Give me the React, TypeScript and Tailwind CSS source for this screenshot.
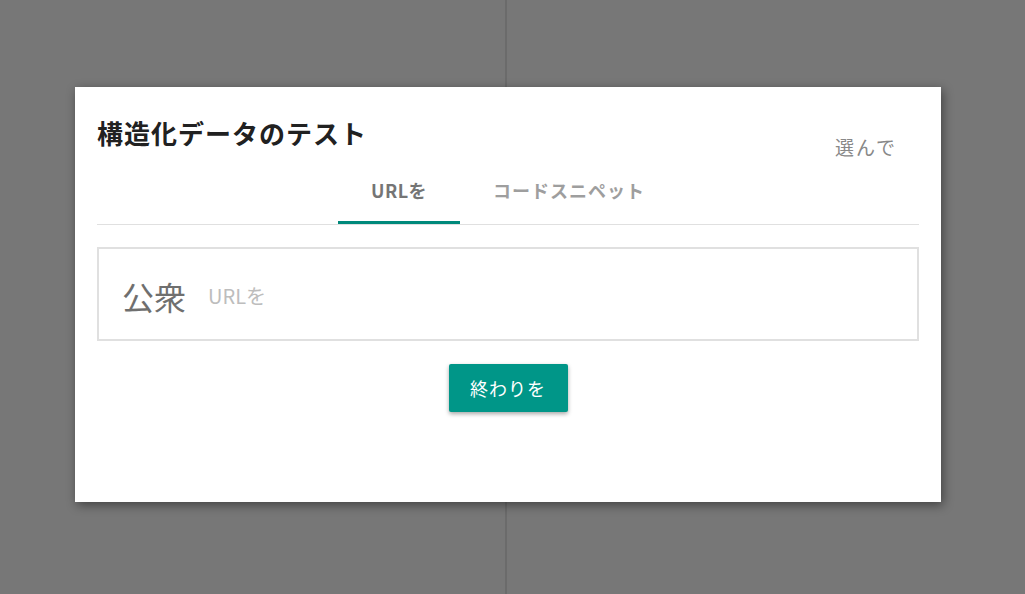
import React from 'react';

const JP = { fontFamily: '"Noto Sans CJK JP", "Noto Sans", Roboto, sans-serif' };

const App: React.FC = () => {
  return (
    <div className="relative h-[594px] w-full overflow-hidden bg-[#777777]" style={JP}>
      {/* background page split */}
      <div className="flex h-full">
        <div className="w-[507px] h-full border-r-2 border-[#6b6b6b]" />
        <div className="flex-1 h-full" />
      </div>

      {/* dialog */}
      <div className="absolute left-[75px] top-[87px] w-[866px] h-[415px] bg-white shadow-[2px_3px_10px_rgba(0,0,0,0.45)] px-[22px] pt-[30px]">
        <div className="flex justify-between h-[32px]">
          <h1 className="text-[26px] leading-[32px] font-bold text-[#212121] tracking-[1px]">構造化データのテスト</h1>
          <span className="mt-[19px] mr-[22px] text-[19px] leading-[22px] text-[#888888] tracking-[2px]">選んで</span>
        </div>

        <div className="flex justify-center border-b border-[#e0e0e0]">
          <div className="px-[33px] pt-[29px] pb-[19px] border-b-[3px] border-[#00897b] text-[18px] leading-6 font-bold text-[#757575] tracking-[0.5px]">
            URLを
          </div>
          <div className="px-[33px] pt-[29px] pb-[19px] border-b-[3px] border-transparent text-[18px] leading-6 font-bold text-[#9e9e9e] tracking-[1px]">
            コードスニペット
          </div>
        </div>

        <div className="mt-[22px] h-[94px] border-2 border-[#e0e0e0] flex items-center pl-[23px] pt-[4px]">
          <span className="text-[32px] leading-10 text-[#6f6f6f]">公衆</span>
          <span className="ml-[22px] text-[20px] leading-6 text-[#bdbdbd]">URLを</span>
        </div>

        <div className="flex justify-center mt-[23px]">
          <button className="w-[119px] h-[48px] rounded-[2px] bg-[#009688] text-white text-[18px] font-normal tracking-[1px] shadow-[0_2px_4px_rgba(0,0,0,0.35)]">
            終わりを
          </button>
        </div>
      </div>
    </div>
  );
};

export default App;
